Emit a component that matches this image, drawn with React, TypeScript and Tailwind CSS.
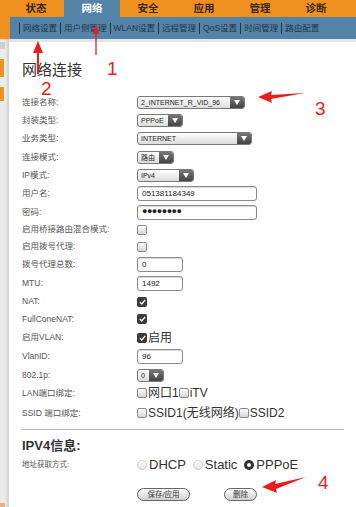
import React from "react";

const cjk = { fontFamily: '"Liberation Sans", "Noto Sans CJK SC", sans-serif' };

function Select({ w, text }: { w: number; text: string }) {
  return (
    <div
      className="flex h-[13px] items-stretch overflow-hidden rounded-[3px] border border-[#7a7a7a] bg-gradient-to-b from-white to-[#dcdcdc]"
      style={{ width: w }}
    >
      <div className="flex flex-1 items-center whitespace-nowrap pl-[3px] text-[7px] leading-none text-[#222]">{text}</div>
      <div className="flex w-[14px] items-center justify-center bg-gradient-to-b from-[#777] to-[#444]">
        <svg width="6" height="5" viewBox="0 0 6 5">
          <path d="M0 0 L6 0 L3 5 Z" fill="#fff" />
        </svg>
      </div>
    </div>
  );
}

function Input({ w, text, pw }: { w: number; text: string; pw?: boolean }) {
  return (
    <div
      className="flex h-[15px] items-center rounded-[3px] border border-[#8a8a8a] bg-white pl-[4px] text-[8px] text-[#222] shadow-[inset_0_1px_1px_rgba(0,0,0,0.15)]"
      style={{ width: w }}
    >
      {pw ? <span className="text-[9px] font-bold tracking-[-0.5px]">●●●●●●●●</span> : text}
    </div>
  );
}

function Check({ on }: { on?: boolean }) {
  return on ? (
    <div className="flex h-[10px] w-[10px] items-center justify-center rounded-[2px] bg-[#3a3a3a]">
      <svg width="7" height="6" viewBox="0 0 7 6">
        <path d="M0.8 3 L2.8 5 L6.2 0.8" stroke="#fff" strokeWidth="1.3" fill="none" />
      </svg>
    </div>
  ) : (
    <div className="h-[10px] w-[10px] rounded-[2px] border border-[#8a8a8a] bg-gradient-to-b from-white to-[#d4d4d4]" />
  );
}

function Radio({ on }: { on?: boolean }) {
  return on ? (
    <div className="flex h-[10px] w-[10px] items-center justify-center rounded-full bg-[#333]">
      <div className="h-[4px] w-[4px] rounded-full bg-white" />
    </div>
  ) : (
    <div className="h-[10px] w-[10px] rounded-full border border-[#d0d0d0] bg-gradient-to-b from-white to-[#e6e6e6]" />
  );
}

function Row({ h, label, children }: { h: number; label: string; children: React.ReactNode }) {
  return (
    <div className="flex items-center" style={{ height: h }}>
      <div className="w-[115px] text-[8.5px] text-[#555]">{label}</div>
      <div className="flex items-center">{children}</div>
    </div>
  );
}

function Btn({ text, w }: { text: string; w: number }) {
  return (
    <div
      className="flex h-[13px] items-center justify-center rounded-full border border-[#666] bg-gradient-to-b from-white to-[#cfcfcf] text-[7.5px] text-[#333]"
      style={{ width: w }}
    >
      {text}
    </div>
  );
}

export default function App() {
  const tabs = ["状态", "网络", "安全", "应用", "管理", "诊断"];
  const subs = ["网络设置", "用户侧管理", "WLAN设置", "远程管理", "QoS设置", "时间管理", "路由配置"];
  return (
    <div className="relative h-[507px] w-[356px] overflow-hidden bg-white" style={cjk}>
      {/* top tabs */}
      <div className="flex h-[17px] bg-[#f0901f] pl-[8px]">
        {tabs.map((t, i) => (
          <div
            key={t}
            className={
              "flex h-full w-[56px] items-center justify-center text-[10.5px] font-bold " +
              (i === 1 ? "bg-[#5383a6] text-white" : "text-[#3a2a10]")
            }
          >
            {t}
          </div>
        ))}
      </div>
      {/* sub nav */}
      <div className="flex h-[22px] bg-[#f0901f]">
        <div className="ml-[10px] flex flex-1 items-center bg-[#5383a6] pl-[7px]">
          {subs.map((s) => (
            <div key={s} className="flex items-center text-[8.5px] text-[#1f3546]">
              <span className="mx-[2px] h-[11px] w-[1px] bg-[#1f3546]" />
              <span className="px-[1px]">{s}</span>
            </div>
          ))}
        </div>
      </div>
      {/* body */}
      <div className="flex h-[468px]">
        <div className="flex w-[9px] flex-col bg-[#ececec] shadow-[inset_-2px_0_3px_rgba(0,0,0,0.12)]">
          <div className="mt-[3px] h-[7px] w-[5px] bg-[#cfcfcf]" />
          <div className="mt-[10px] h-[18px] w-[4px] bg-[#f0901f]" />
          <div className="mt-[10px] h-[14px] w-[4px] bg-[#f0901f]" />
          <div className="flex-1" />
          <div className="h-[4px] w-[5px] bg-[#f0b070]" />
        </div>
        <div className="flex-1 border-t-[3px] border-[#e4e4e4] pl-[13px]">
          <div className="pt-[20px] text-[15px] leading-none text-[#333]">网络连接</div>
          <div className="mt-[16px] flex flex-col">
            <Row h={18} label="连接名称:"><Select w={108} text="2_INTERNET_R_VID_96" /></Row>
            <Row h={18} label="封装类型:"><Select w={46} text="PPPoE" /></Row>
            <Row h={19} label="业务类型:"><Select w={115} text="INTERNET" /></Row>
            <Row h={18} label="连接模式:"><Select w={37} text="路由" /></Row>
            <Row h={18} label="IP模式:"><Select w={57} text="IPv4" /></Row>
            <Row h={19} label="用户名:"><Input w={120} text="051381184349" /></Row>
            <Row h={18} label="密码:"><Input w={120} text="" pw /></Row>
            <Row h={17} label="启用桥接路由混合模式:"><Check /></Row>
            <Row h={17} label="启用拨号代理:"><Check /></Row>
            <Row h={19} label="拨号代理总数:"><Input w={46} text="0" /></Row>
            <Row h={19} label="MTU:"><Input w={46} text="1492" /></Row>
            <Row h={17} label="NAT:"><Check on /></Row>
            <Row h={18} label="FullConeNAT:"><Check on /></Row>
            <Row h={19} label="启用VLAN:">
              <Check on />
              <span className="ml-[1px] text-[12px] text-[#333]">启用</span>
            </Row>
            <Row h={19} label="VlanID:"><Input w={46} text="96" /></Row>
            <Row h={18} label="802.1p:"><Select w={27} text="0" /></Row>
            <Row h={18} label="LAN端口绑定:">
              <Check />
              <span className="ml-[1px] text-[12px] text-[#333]">网口1</span>
              <Check />
              <span className="ml-[1px] text-[12px] text-[#333]">iTV</span>
            </Row>
            <Row h={22} label="SSID 端口绑定:">
              <Check />
              <span className="ml-[1px] text-[12px] text-[#333]">SSID1(无线网络)</span>
              <Check />
              <span className="ml-[1px] text-[12px] text-[#333]">SSID2</span>
            </Row>
          </div>
          <div className="mt-[5px] mr-[12px] h-[1px] bg-[#bbb]" />
          <div className="mt-[9px] text-[13px] font-bold leading-none text-[#333]">IPV4信息:</div>
          <div className="mt-[3px] flex h-[20px] items-center">
            <div className="w-[115px] text-[7.5px] text-[#555]">地址获取方式:</div>
            <div className="flex items-center text-[13px] text-[#333]">
              <Radio />
              <span className="ml-[2px] mr-[7px]">DHCP</span>
              <Radio />
              <span className="ml-[2px] mr-[7px]">Static</span>
              <Radio on />
              <span className="ml-[2px]">PPPoE</span>
            </div>
          </div>
          <div className="mt-[13px] flex items-center pl-[115px]">
            <Btn text="保存/应用" w={53} />
            <div className="w-[34px]" />
            <Btn text="删除" w={33} />
          </div>
        </div>
      </div>

      {/* red annotations */}
      <svg className="pointer-events-none absolute left-0 top-0" width="356" height="507" viewBox="0 0 356 507">
        <g fill="#ea1d1d" stroke="#ea1d1d">
          <line x1="96" y1="55" x2="96" y2="30" strokeWidth="1.3" />
          <path d="M96 23 L93 34 L99 34 Z" stroke="none" />
          <line x1="38" y1="74" x2="38" y2="50" strokeWidth="2" />
          <path d="M38 41 L33 53 L43 53 Z" stroke="none" />
          <path d="M258 97 L272 91 L271 95 L305 93 L271 99 L272 103 Z" stroke="none" />
          <path d="M262 487 L276 480 L275 484 L306 477 L276 489 L277 493 Z" stroke="none" />
        </g>
        <g fill="#ea1d1d" fontFamily="Liberation Sans, sans-serif" fontSize="19">
          <text x="107" y="75">1</text>
          <text x="41" y="95">2</text>
          <text x="315" y="115">3</text>
          <text x="318" y="489">4</text>
        </g>
      </svg>
    </div>
  );
}
